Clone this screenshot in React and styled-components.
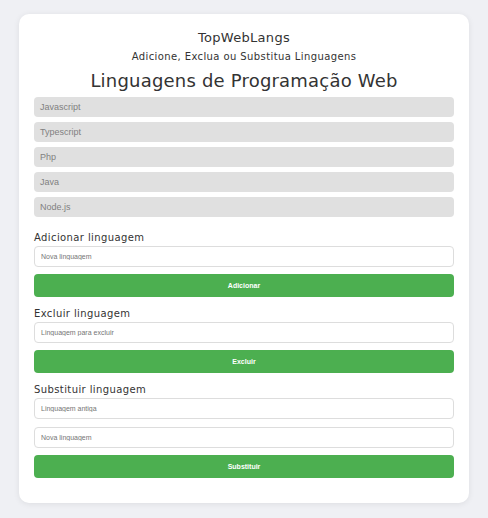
import styled, { createGlobalStyle } from "styled-components";

const GlobalStyle = createGlobalStyle`
  body {
    margin: 0;
    background: #eff0f4;
    font-family: "DejaVu Sans", sans-serif;
  }
`;

const languages = ["Javascript", "Typescript", "Php", "Java", "Node.js"];

const App = () => {
  return (
    <Page>
      <GlobalStyle />
      <Card>
        <Title>TopWebLangs</Title>
        <Subtitle>Adicione, Exclua ou Substitua Linguagens</Subtitle>
        <Heading>Linguagens de Programação Web</Heading>
        <List>
          {languages.map((lang) => (
            <Item key={lang}>{lang}</Item>
          ))}
        </List>

        <Section $first>
          <Label>Adicionar linguagem</Label>
          <Input placeholder="Nova linguagem" />
          <Button>Adicionar</Button>
        </Section>

        <Section>
          <Label>Excluir linguagem</Label>
          <Input placeholder="Linguagem para excluir" />
          <Button>Excluir</Button>
        </Section>

        <Section>
          <Label>Substituir linguagem</Label>
          <Input placeholder="Linguagem antiga" />
          <Input placeholder="Nova linguagem" />
          <Button>Substituir</Button>
        </Section>
      </Card>
    </Page>
  );
};

const Page = styled.div`
  padding: 14px 19px;
`;

const Card = styled.div`
  background: #fff;
  border-radius: 10px;
  box-shadow: 0 1px 6px rgba(0, 0, 0, 0.08);
  padding: 14px 15px 25px;
  display: flex;
  flex-direction: column;
`;

const Title = styled.h1`
  margin: 0;
  text-align: center;
  font-size: 13px;
  font-weight: normal;
  line-height: 20px;
  color: #333;
  letter-spacing: 0.3px;
`;

const Subtitle = styled.p`
  margin: 1px 0 0;
  text-align: center;
  font-size: 10px;
  line-height: 16px;
  color: #333;
  letter-spacing: 0.4px;
`;

const Heading = styled.h2`
  margin: 3px 0 0;
  text-align: center;
  font-size: 18px;
  font-weight: normal;
  line-height: 26px;
  color: #333;
  letter-spacing: 0.2px;
`;

const List = styled.ul`
  list-style: none;
  margin: 3px 0 0;
  padding: 0;
  display: flex;
  flex-direction: column;
  gap: 5px;
`;

const Item = styled.li`
  height: 20px;
  line-height: 20px;
  background: #e0e0e0;
  border-radius: 4px;
  padding: 0 6px;
  font-family: "Liberation Sans", Arial, sans-serif;
  font-size: 9px;
  color: #808080;
`;

const Section = styled.div`
  margin-top: ${(p) => (p.$first ? "14px" : "10px")};
  display: flex;
  flex-direction: column;
  gap: 7px;
`;

const Label = styled.label`
  font-size: 10px;
  line-height: 14px;
  color: #333;
  letter-spacing: 0.4px;
  margin-bottom: -6px;
`;

const Input = styled.input`
  box-sizing: border-box;
  height: 21px;
  width: 100%;
  border: 1px solid #ddd;
  border-radius: 4px;
  padding: 0 6px;
  font-family: "Liberation Sans", Arial, sans-serif;
  font-size: 7px;
  color: #333;
  outline: none;
  & + & {
    margin-top: 1px;
  }
  &::placeholder {
    color: #757575;
  }
`;

const Button = styled.button`
  height: 23px;
  width: 100%;
  border: none;
  border-radius: 4px;
  background: #4caf50;
  color: #fff;
  font-family: "Liberation Sans", Arial, sans-serif;
  font-size: 7px;
  font-weight: bold;
  cursor: pointer;
`;

export default App;
